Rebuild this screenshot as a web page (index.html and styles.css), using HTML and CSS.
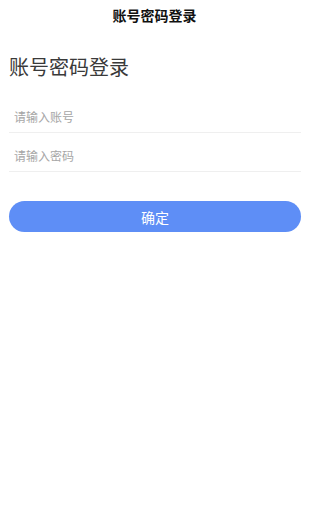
FILE: index.html
```html
<!DOCTYPE html>
<html lang="zh-CN">
<head>
<meta charset="utf-8">
<title>账号密码登录</title>
<link rel="stylesheet" href="styles.css">
</head>
<body>
<div class="page">
  <header class="navbar">账号密码登录</header>
  <main class="content">
    <h1 class="heading">账号密码登录</h1>
    <form class="form">
      <div class="field"><input class="input" type="text" placeholder="请输入账号"></div>
      <div class="field"><input class="input" type="password" placeholder="请输入密码"></div>
      <button class="submit" type="button">确定</button>
    </form>
  </main>
</div>
</body>
</html>
```
FILE: styles.css
```css
* { box-sizing: border-box; }
html, body {
  margin: 0;
  padding: 0;
  background: #fff;
  font-family: "Noto Sans CJK SC", "Noto Sans", sans-serif;
}
.page {
  width: 309px;
}
.navbar {
  height: 30px;
  display: flex;
  align-items: center;
  justify-content: center;
  font-size: 14px;
  font-weight: 700;
  color: #111;
}
.content {
  padding: 0 8px 0 9px;
}
.heading {
  margin: 23px 0 13px 0;
  font-size: 20px;
  line-height: 28px;
  font-weight: 400;
  color: #3a3a3a;
}
.form {
  display: flex;
  flex-direction: column;
}
.field {
  height: 39px;
  padding-top: 6px;
  display: flex;
  align-items: center;
  border-bottom: 1px solid #efefef;
}
.input {
  border: 0;
  outline: 0;
  padding: 0 0 0 5px;
  width: 100%;
  font-family: inherit;
  font-size: 12px;
  color: #333;
  background: transparent;
}
.input::placeholder { color: #a6a6a6; }
.submit {
  margin-top: 29px;
  height: 31px;
  border: 0;
  border-radius: 16px;
  background: #5e8ef6;
  color: #fff;
  font-family: inherit;
  font-size: 14px;
  width: 100%;
  padding: 0;
}
```
